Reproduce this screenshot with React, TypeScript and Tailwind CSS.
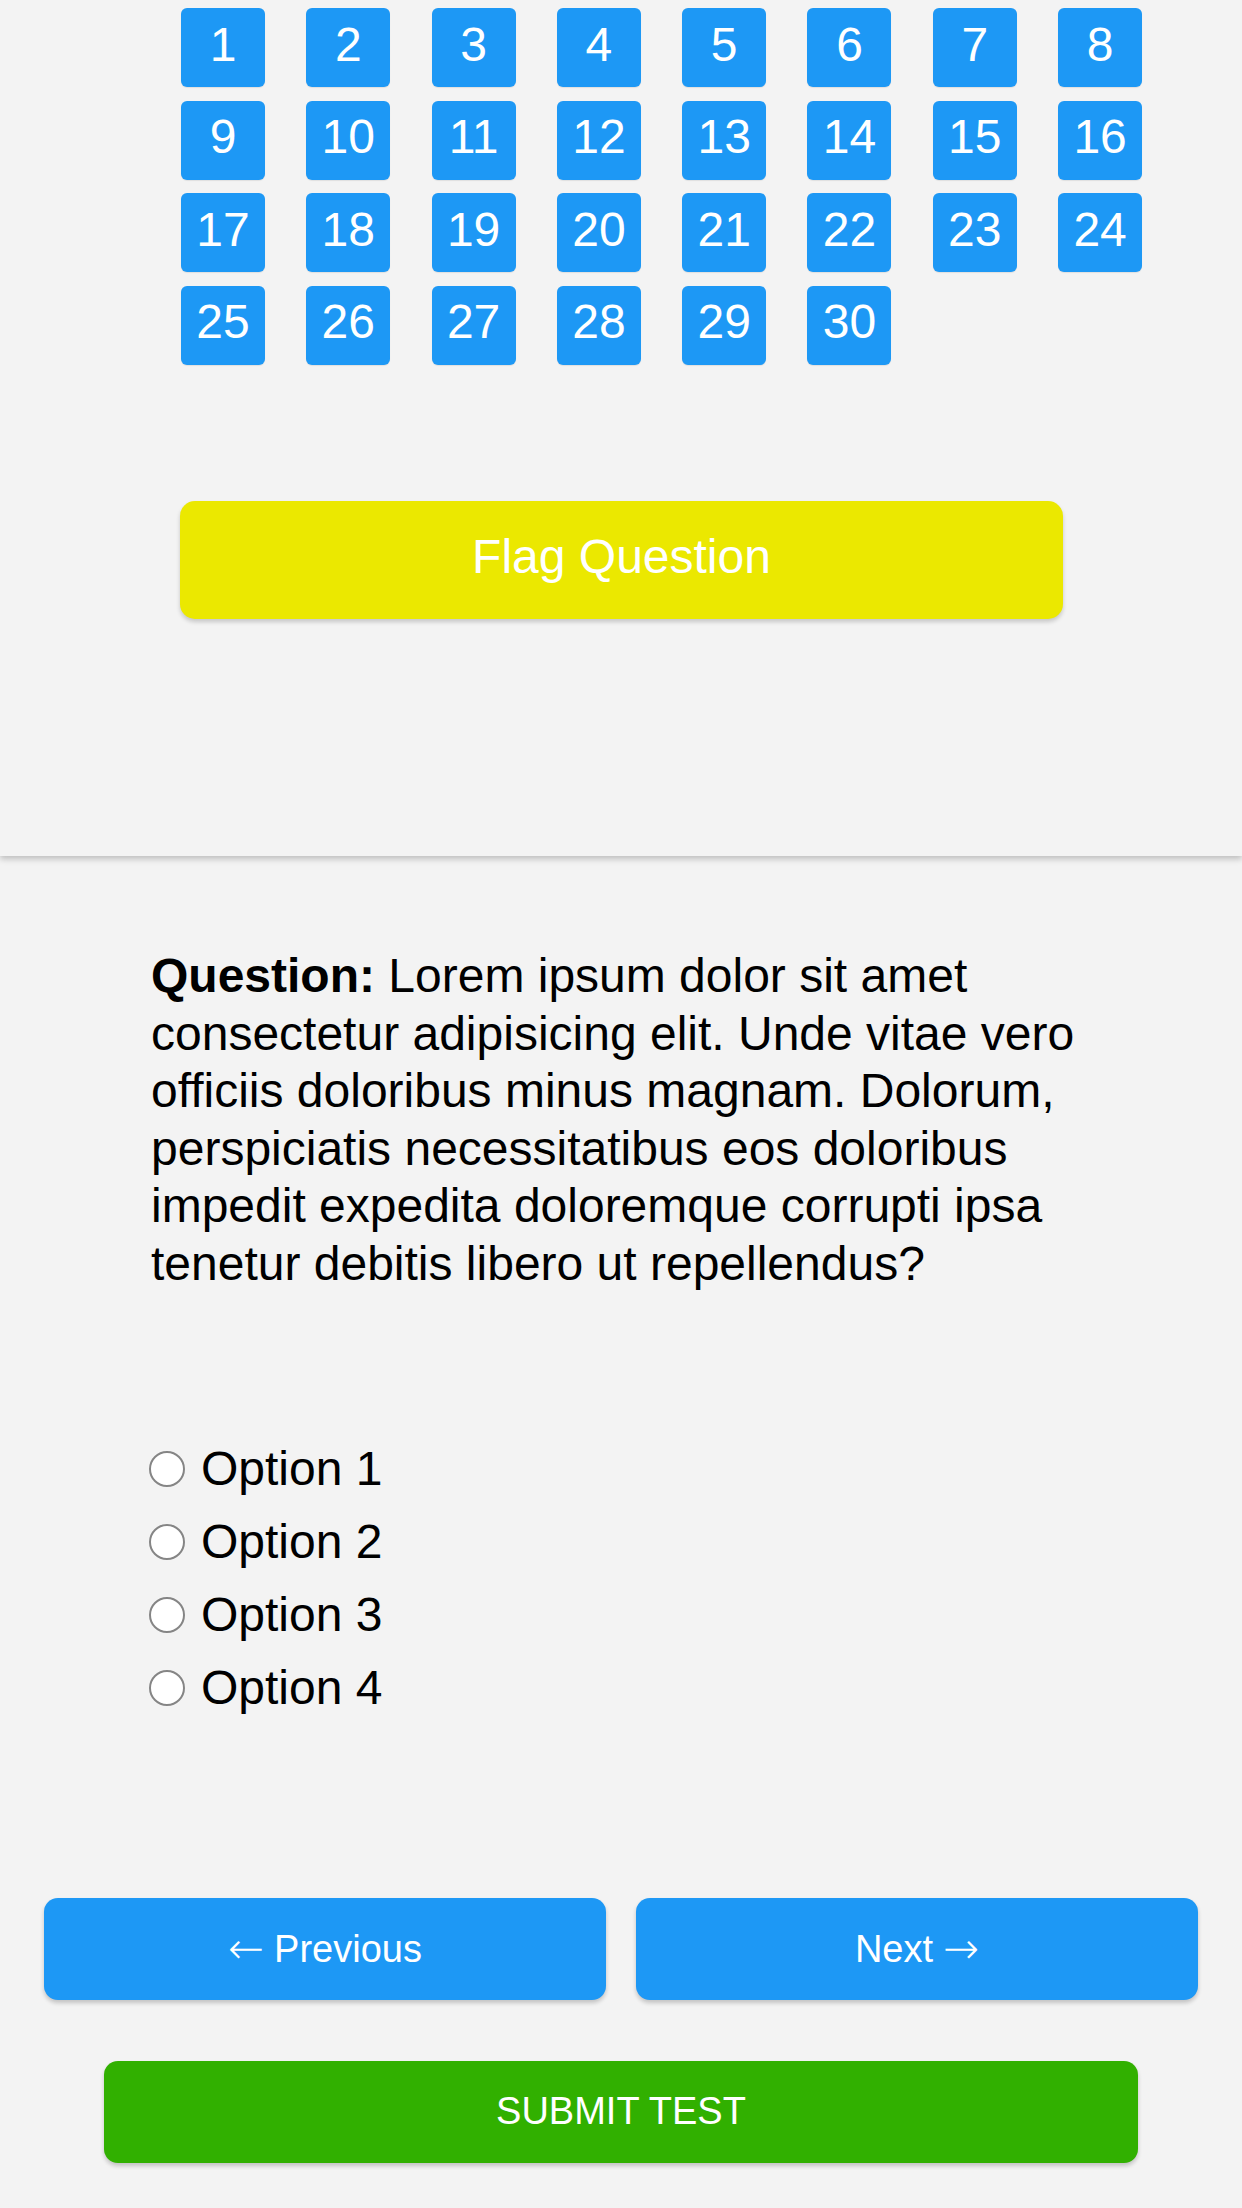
import React from "react";

const numbers = Array.from({ length: 30 }, (_, i) => i + 1);
const options = ["Option 1", "Option 2", "Option 3", "Option 4"];

export default function App() {
  return (
    <div className="min-h-screen bg-[#f3f3f3] font-['Liberation_Sans',Arial,sans-serif] text-black">
      {/* question palette + flag */}
      <div className="relative z-10 h-[856px] bg-[#f3f3f3] pt-[8px] shadow-[0_3px_6px_rgba(0,0,0,0.22)]">
        <div className="ml-[181px] grid grid-cols-[repeat(8,84px)] gap-x-[41.3px] gap-y-[13.5px]">
          {numbers.map((n) => (
            <button
              key={n}
              className="flex h-[79px] items-center justify-center rounded-[6px] bg-[#1d98f5] pb-[6px] text-[48px] text-white shadow-[0_1px_1px_rgba(0,0,0,0.08)]"
            >
              {n}
            </button>
          ))}
        </div>

        <button className="ml-[180px] mt-[136px] flex h-[118px] w-[883px] items-center justify-center rounded-[15px] bg-[#ebe800] pb-[6px] text-[48px] text-white shadow-[0_3px_4px_rgba(0,0,0,0.18)]">
          Flag Question
        </button>
      </div>

      {/* question */}
      <div className="px-[151px] pt-[91px]">
        <p className="text-[48px] leading-[57.6px]">
          <span className="font-bold">Question:</span> Lorem ipsum dolor sit amet
          consectetur adipisicing elit. Unde vitae vero officiis doloribus minus
          magnam. Dolorum, perspiciatis necessitatibus eos doloribus impedit
          expedita doloremque corrupti ipsa tenetur debitis libero ut
          repellendus?
        </p>

        <div className="mt-[140px]">
          {options.map((opt) => (
            <label key={opt} className="flex h-[73px] items-center gap-[16px]">
              <span className="-ml-[2px] h-[36px] w-[36px] rounded-full border-2 border-[#858585] bg-white" />
              <span className="text-[48px]">{opt}</span>
            </label>
          ))}
        </div>
      </div>

      {/* navigation */}
      <div className="mt-[173px] flex gap-[30px] px-[44px]">
        <button className="flex h-[102px] flex-1 items-center justify-center gap-[10px] rounded-[14px] bg-[#1d98f5] text-[38px] leading-none text-white shadow-[0_3px_4px_rgba(0,0,0,0.2)]">
          <span className="font-['DejaVu_Sans',sans-serif] text-[43px] font-light">←</span>
          <span>Previous</span>
        </button>
        <button className="flex h-[102px] flex-1 items-center justify-center gap-[10px] rounded-[14px] bg-[#1d98f5] text-[38px] leading-none text-white shadow-[0_3px_4px_rgba(0,0,0,0.2)]">
          <span>Next</span>
          <span className="font-['DejaVu_Sans',sans-serif] text-[43px] font-light">→</span>
        </button>
      </div>

      <div className="px-[104px] pb-[45px] pt-[61px]">
        <button className="flex h-[102px] w-full items-center justify-center rounded-[14px] bg-[#31b000] text-[38px] text-white shadow-[0_3px_4px_rgba(0,0,0,0.2)]">
          SUBMIT TEST
        </button>
      </div>
    </div>
  );
}
